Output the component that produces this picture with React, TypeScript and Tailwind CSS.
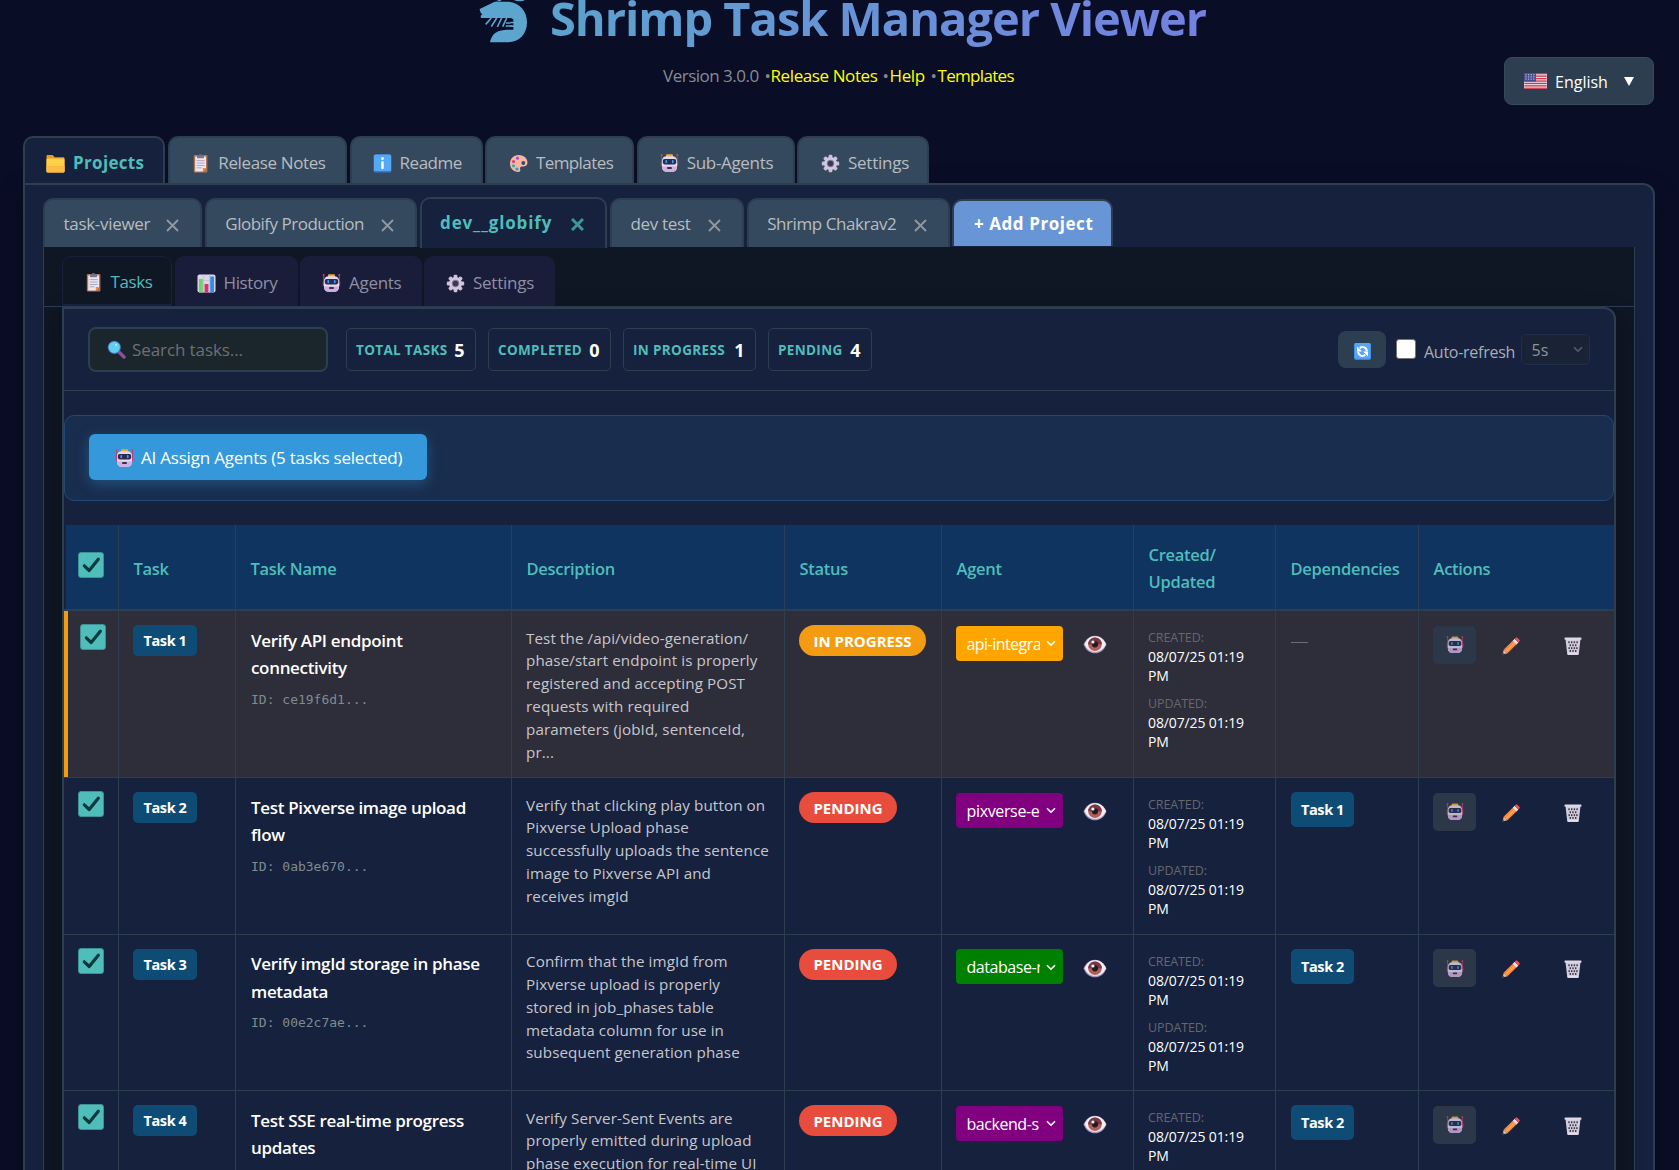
import type { ReactNode } from 'react';

type IconProps = { className?: string };

const Robot = ({ className = 'h-[18px] w-[19px]' }: IconProps) => (
  <svg viewBox="0 0 19 18" className={`shrink-0 ${className}`}>
    <rect x="1.2" y="0.5" width="1" height="8" fill="#c2336a" />
    <rect x="16.8" y="0.5" width="1" height="8" fill="#c2336a" />
    <rect x="0.7" y="0" width="1.8" height="1.8" rx="0.9" fill="#e0406f" />
    <rect x="16.4" y="0" width="1.8" height="1.8" rx="0.9" fill="#e0406f" />
    <rect x="0.8" y="6.5" width="17.4" height="6" rx="1.5" fill="#d23f74" />
    <rect x="6" y="0.3" width="7" height="4" rx="1" fill="#efae25" />
    <rect x="2" y="2.2" width="15" height="15.6" rx="4.5" fill="#e3d8ec" />
    <path d="M2 12.5h15v.8a4.5 4.5 0 0 1-4.500 4.500h-6A4.500 4.500 0 0 1 2 13.300z" fill="#cfb0e0" />
    <rect x="2.800" y="5" width="13.400" height="5.400" rx="1.800" fill="#2c2a50" />
    <rect x="5.400" y="6" width="1.700" height="3.200" rx="0.800" fill="#2fa4ef" />
    <rect x="11.900" y="6" width="1.700" height="3.200" rx="0.800" fill="#2fa4ef" />
    <rect x="7.200" y="12.900" width="4.600" height="2" rx="0.500" fill="#45294f" />
  </svg>
);

const Gear = () => (
  <svg viewBox="0 0 19 19" className="h-[19px] w-[19px] shrink-0">
    {[0, 45, 90, 135].map((a) => (
      <rect key={a} x="7.6" y="0.8" width="3.8" height="17.4" rx="1.2" fill="#cdc0da" transform={`rotate(${a} 9.5 9.5)`} />
    ))}
    <circle cx="9.5" cy="9.5" r="6.4" fill="#d3c8df" />
    <circle cx="9.5" cy="9.5" r="3.7" fill="#8a7c9c" />
    <circle cx="9.5" cy="9.5" r="2.7" fill="#2f3d55" />
  </svg>
);

const Clipboard = () => (
  <svg viewBox="0 0 19 19" className="h-[19px] w-[19px] shrink-0">
    <rect x="2.8" y="1" width="13.6" height="17.6" rx="1" fill="#b9734a" />
    <path d="M4.2 2.6H15V14l-3.2 3.4H4.2z" fill="#ece6f4" />
    <path d="M15 14l-3.2 3.4V14z" fill="#e08c4d" />
    <rect x="6" y="1" width="7" height="3.2" rx="0.6" fill="#7d7488" />
    <rect x="8" y="0" width="3" height="2" rx="1" fill="#6d6479" />
    {[6.2, 8.6, 11, 13.4].map((y) => (
      <rect key={y} x="5.6" y={y} width={y > 13 ? 5 : 8} height="0.9" fill="#a89fb8" />
    ))}
  </svg>
);

const Folder = () => (
  <svg viewBox="0 0 19 19" className="h-[19px] w-[19px] shrink-0">
    <path d="M.5 2.2C.5 1.5 1 1 1.7 1h5l2 2.2h8.6c.7 0 1.2.5 1.2 1.2v12.4H.5z" fill="#e89a20" />
    <rect x="0.5" y="4.5" width="18" height="14" rx="1.3" fill="#ffd04a" />
    <path d="M.5 12h18v5.2c0 .7-.6 1.300-1.300 1.300H1.800c-.7 0-1.300-.6-1.300-1.300z" fill="#fdbb45" />
  </svg>
);

const Info = () => (
  <svg viewBox="0 0 19 19" className="h-[19px] w-[19px] shrink-0">
    <rect x="0.5" y="0.5" width="18" height="18" rx="1.8" fill="#3a78d8" />
    <rect x="1" y="0.5" width="17" height="16.6" rx="1.6" fill="#55a8f5" />
    <circle cx="9.5" cy="4.6" r="1.4" fill="#fff" />
    <rect x="8.3" y="7.2" width="2.4" height="7.8" rx="0.8" fill="#fff" />
  </svg>
);

const Palette = () => (
  <svg viewBox="0 0 19 19" className="h-[19px] w-[19px] shrink-0">
    <path d="M9.5 1C4.6 1 1 4.8 1 9.6 1 14.5 4.5 18 9 18c2 0 2.7-1.3 2.2-2.7-.6-1.8.3-3 2.3-2.8 3 .2 5-1 5-3.9C18.5 4 14.4 1 9.5 1z" fill="#f7b7a0" />
    <circle cx="14.3" cy="9" r="1.9" fill="#3a4a60" />
    <circle cx="8.5" cy="4.2" r="1.6" fill="#b04ae0" />
    <circle cx="4.5" cy="7.5" r="1.6" fill="#e8357a" />
    <circle cx="4.5" cy="11.8" r="1.6" fill="#21b8a4" />
    <circle cx="8" cy="15" r="1.6" fill="#3a8ef0" />
  </svg>
);

const Chart = () => (
  <svg viewBox="0 0 19 19" className="h-[19px] w-[19px] shrink-0">
    <rect x="0.5" y="0.5" width="18" height="18" rx="2" fill="#dcd5e6" />
    <path d="M.5 6.5h18M.5 12h18M6.500.5v18M12.500.5v18" stroke="#c2b8d2" strokeWidth="0.7" />
    <rect x="2" y="5" width="3.8" height="13.5" fill="#6fd36a" />
    <rect x="7.6" y="10" width="3.8" height="8.5" fill="#d9306f" />
    <rect x="13.2" y="2.5" width="3.8" height="16" fill="#2d8fe6" />
  </svg>
);

const Magnifier = () => (
  <svg viewBox="0 0 19 19" className="h-[19px] w-[19px] shrink-0">
    <path d="M12 12l5 5" stroke="#8d4f9c" strokeWidth="3.4" strokeLinecap="round" />
    <circle cx="7.3" cy="7.3" r="6.6" fill="#4a74c8" />
    <circle cx="7.3" cy="7.3" r="5.6" fill="#5fd0f0" />
    <circle cx="9" cy="4.8" r="1.1" fill="#b5ecfa" />
  </svg>
);

const Refresh = () => (
  <svg viewBox="0 0 17 17" className="h-[17px] w-[17px] shrink-0">
    <rect width="17" height="17" rx="1.7" fill="#3d7fe0" />
    <rect x="0.5" width="16" height="15.8" rx="1.5" fill="#55a6f7" />
    <path d="M4.2 8.8a4.200 4.200 0 0 0 7 3M12.800 8.200a4.200 4.200 0 0 0-7-3" stroke="#fff" strokeWidth="1.9" fill="none" />
    <path d="M3 3.500v5h5zM14 13.500v-5H9z" fill="#fff" />
  </svg>
);

const Eye = () => (
  <svg viewBox="0 0 24 19" className="h-[19px] w-[24px] shrink-0">
    <path d="M.5 9.5C3 3.500 7 .7 12 .7s9 2.800 11.500 8.800c-2.500 6-6.500 8.800-11.500 8.800S3 15.500.500 9.500z" fill="#a796bd" />
    <path d="M1.500 9.200C4 3.800 7.500 1.200 12 1.200s8.500 2.600 11 8c-2.500 5.200-6.500 7.600-11 7.600S4 14.400 1.500 9.200z" fill="#f2eef6" />
    <circle cx="12" cy="9.3" r="6.8" fill="#b0605a" />
    <path d="M5.200 9.300a6.800 6.800 0 0 1 13.600 0z" fill="#7a3845" />
    <circle cx="12" cy="9.3" r="3.100" fill="#2a1722" />
    <circle cx="9.900" cy="7" r="1.600" fill="#fff" />
  </svg>
);

const Pencil = () => (
  <svg viewBox="0 0 18 18" className="h-[18px] w-[18px] shrink-0">
    <path d="M.5 17.500l1.300-5 3.700 3.700z" fill="#e8b98f" />
    <path d="M1.800 12.500L11.500 3l3.700 3.700-9.700 9.500z" fill="#f98a3e" />
    <path d="M3.300 14L13 4.500l1 1L4.400 15z" fill="#ffa45c" />
    <path d="M10.800 3.700l1.900-1.900 3.700 3.700-1.900 1.900z" fill="#e6dcf2" />
    <path d="M12.700 1.800L13.700.8c.5-.5 1.200-.5 1.700 0l2 2c.5.5.5 1.200 0 1.700l-1 1z" fill="#f0504a" />
    <path d="M.5 17.500l.5-1.900 1.400 1.400z" fill="#4a3540" />
  </svg>
);

const Trash = () => (
  <svg viewBox="0 0 18 18" className="h-[18px] w-[18px] shrink-0">
    <path d="M1.500 2h15l-1.700 14.800c-.1.600-.5 1-1.100 1H4.300c-.6 0-1-.4-1.100-1z" fill="#d3ccdc" />
    <g fill="#3a3546">
      {[4.3, 7, 9.7, 12.4].map((x) => <rect key={x} x={x} y="4.3" width="1.4" height="1.9" />)}
      {[5.6, 8.3, 11].map((x) => <rect key={x} x={x} y="7.3" width="1.4" height="1.9" />)}
      {[4.5, 7, 9.7, 12.2].map((x) => <rect key={x} x={x} y="10.2" width="1.4" height="1.9" />)}
      {[5.6, 8.3, 11].map((x) => <rect key={x} x={x} y="13" width="1.4" height="1.9" />)}
    </g>
    <rect x="0.5" y="0.5" width="17" height="2.3" rx="0.8" fill="#ded7e6" />
    <rect x="3.6" y="16.3" width="10.8" height="1.4" fill="#eee9f3" />
  </svg>
);

const Flag = () => (
  <svg viewBox="0 0 23 16" className="h-[16px] w-[23px] shrink-0">
    <rect width="23" height="16" rx="1.5" fill="#efe6ee" />
    {[0, 2.5, 5, 7.4, 9.8, 12.2, 14.6].map((y) => (
      <rect key={y} x="0.3" y={y} width="22.4" height="1.3" fill="#c8384e" />
    ))}
    <rect width="12" height="8.6" fill="#4a4f94" />
    {[1.2, 3.4, 5.6].map((y) =>
      [1.4, 4, 6.6, 9.2].map((x) => <rect key={`${x}-${y}`} x={x} y={y} width="1.2" height="1" fill="#c9c9e4" />),
    )}
  </svg>
);

const Check = () => (
  <svg viewBox="0 0 26 26" className="h-[26px] w-[26px] shrink-0">
    <rect x="0.5" y="0.5" width="25" height="25" rx="2.5" fill="#4fbdba" stroke="#3f8f96" />
    <path d="M6.300 13.800l4.900 4.700L20.300 7.300" fill="none" stroke="#053a3c" strokeWidth="3.2" strokeLinecap="round" strokeLinejoin="round" />
  </svg>
);

const Close = ({ active }: { active?: boolean }) => (
  <svg viewBox="0 0 13 13" className={`h-[13px] w-[13px] shrink-0 ${active ? 'mt-[3px] text-[#3e9699]' : 'mt-[3px] text-[#8f989f]'}`}>
    <path d="M1 1l11 11M12 1L1 12" stroke="currentColor" strokeWidth={active ? 3 : 1.9} />
  </svg>
);

const Chevron = () => (
  <svg viewBox="0 0 10 7" className="h-[7px] w-[10px] shrink-0">
    <path d="M1 1.200l4 4 4-4" fill="none" stroke="currentColor" strokeWidth="1.6" />
  </svg>
);

const Shrimp = () => (
  <svg viewBox="28 0 150 135" className="mr-[21px] h-[45px] w-[50px] shrink-0" fill="#5ba5cf">
    <path d="M30 27L75 5h42c35 3 55 30 55 62 0 36-24 60-58 60H61c4-20 14-31 31-35 9-2 16-3 22-3h17v-8h-9v-5h9v-6h-9v-5h9v-7c-3-3-8-4-13-4H34c-2-5-1-8 4-11-4-3-7-7-8-16z" />
    <path d="M78 4L88 0h8l-5 4zM132 0h34c-8 5-21 5-34 0z" />
    <path d="M65 54l-17 19M81 54L65 80M96 54L83 81M111 54L99 80" stroke="#5ba5cf" strokeWidth="5" />
    <path d="M113 60l-7 18v8h8V60z" fill="#0a0d26" />
    <path d="M109 69h14M108 78h18" stroke="#5ba5cf" strokeWidth="5" />
  </svg>
);

const mainTabs: { label: string; icon: ReactNode; size: string; active?: boolean }[] = [
  { label: 'Projects', icon: <Folder />, size: 'w-[142px] pl-[21px] tracking-[0.32px]', active: true },
  { label: 'Release Notes', icon: <Clipboard />, size: 'w-[179px] pl-[21.5px] tracking-[-0.37px]' },
  { label: 'Readme', icon: <Info />, size: 'w-[133px] pl-[21px] tracking-[-0.5px]' },
  { label: 'Templates', icon: <Palette />, size: 'w-[148.5px] pl-[21.5px] tracking-[-0.58px]' },
  { label: 'Sub-Agents', icon: <Robot />, size: 'w-[158px] pl-[21px] tracking-[-0.32px]' },
  { label: 'Settings', icon: <Gear />, size: 'w-[132px] pl-[21.5px] tracking-[-0.25px]' },
];

const projectTabs = [
  { label: 'task-viewer', size: 'w-[159px] tracking-[-0.3px]' },
  { label: 'Globify Production', size: 'w-[212px] tracking-[-0.5px]' },
  { label: 'dev__globify', size: 'w-[187.5px] tracking-[0.84px]', active: true },
  { label: 'dev test', size: 'w-[134px] tracking-[-0.3px]' },
  { label: 'Shrimp Chakrav2', size: 'w-[203px] tracking-[-0.44px]' },
];

const viewTabs = [
  { label: 'Tasks', icon: <Clipboard />, size: 'w-[110px] tracking-[-0.4px]', active: true },
  { label: 'History', icon: <Chart />, size: 'w-[123px] tracking-[-0.4px]' },
  { label: 'Agents', icon: <Robot />, size: 'w-[121.5px] tracking-[-0.3px]' },
  { label: 'Settings', icon: <Gear />, size: 'w-[131px] tracking-[-0.25px]' },
];

const stats = [
  { label: 'TOTAL TASKS', value: 5, size: 'w-[130px]' },
  { label: 'COMPLETED', value: 0, size: 'w-[123px]' },
  { label: 'IN PROGRESS', value: 1, size: 'w-[133px]' },
  { label: 'PENDING', value: 4, size: 'w-[104px]' },
];

const tasks = [
  {
    n: 'Task 1', name: 'Verify API endpoint\nconnectivity', id: 'ce19f6d1...', status: 'IN PROGRESS',
    desc: 'Test the /api/video-generation/\nphase/start endpoint is properly\nregistered and accepting POST\nrequests with required\nparameters (jobId, sentenceId,\npr...',
    agent: 'api-integra', agentBg: 'bg-[#ffa500] tracking-[-0.55px]', dep: '', height: 'h-[167px]',
  },
  {
    n: 'Task 2', name: 'Test Pixverse image upload\nflow', id: '0ab3e670...', status: 'PENDING',
    desc: 'Verify that clicking play button on\nPixverse Upload phase\nsuccessfully uploads the sentence\nimage to Pixverse API and\nreceives imgId',
    agent: 'pixverse-e', agentBg: 'bg-[#800080] tracking-[-0.35px]', dep: 'Task 1', height: 'h-[156.5px]',
  },
  {
    n: 'Task 3', name: 'Verify imgId storage in phase\nmetadata', id: '00e2c7ae...', status: 'PENDING',
    desc: 'Confirm that the imgId from\nPixverse upload is properly\nstored in job_phases table\nmetadata column for use in\nsubsequent generation phase',
    agent: 'database-r', agentBg: 'bg-[#008000] tracking-[-0.45px]', dep: 'Task 2', height: 'h-[156.5px]',
  },
  {
    n: 'Task 4', name: 'Test SSE real-time progress\nupdates', id: '', status: 'PENDING',
    desc: 'Verify Server-Sent Events are\nproperly emitted during upload\nphase execution for real-time UI',
    agent: 'backend-s', agentBg: 'bg-[#800080] tracking-[-0.45px]', dep: 'Task 2', height: 'h-[157px]',
  },
];

const columns = 'grid grid-cols-[55px_117px_276px_273px_157px_192px_142px_143px_1fr]';
const headings = ['Task', 'Task Name', 'Description', 'Status', 'Agent', 'Created/\nUpdated', 'Dependencies', 'Actions'];

function Stamp({ label, className = '' }: { label: string; className?: string }) {
  return (
    <div className={className}>
      <div className="text-[12.5px] leading-[18px] tracking-[-0.1px] text-[#66676d]">{label}</div>
      <div className="whitespace-pre text-[14px] leading-[19px] tracking-[-0.12px] text-white">{'08/07/25 01:19\nPM'}</div>
    </div>
  );
}

function TaskRow({ task, first }: { task: (typeof tasks)[number]; first: boolean }) {
  const cell = 'border-r border-[#2c3e50] px-[14px]';
  return (
    <div className={`${columns} ${task.height} overflow-hidden border-b border-[#2c3e50] ${first ? 'bg-[#2e2d3a]' : ''}`}>
      <div className={`border-r border-[#2c3e50] pt-[13px] ${first ? 'border-l-4 border-l-[#f39c12] pl-3' : 'pl-[14px]'}`}><Check /></div>
      <div className={`${cell} pt-[14px]`}>
        <span className="flex h-[31px] w-[64px] items-center justify-center rounded-[5px] bg-[#0f4c75] pt-px text-[14.5px] font-bold tracking-[-0.4px] text-white">{task.n}</span>
      </div>
      <div className={`${cell} pl-[15px] pt-[15.5px]`}>
        <div className="whitespace-pre text-[17px] font-semibold leading-[27.5px] tracking-[-0.33px] text-white">{task.name}</div>
        {task.id && <div className="mt-2 font-['DejaVu_Sans_Mono'] text-[13px] leading-5 text-[#7f8c8d]">ID: {task.id}</div>}
      </div>
      <div className={`${cell} whitespace-pre pt-[15.5px] text-[15.2px] leading-[22.85px] tracking-[0.1px] text-[#c6c7cc]`}>{task.desc}</div>
      <div className={`${cell} pt-[14px]`}>
        <span className={`flex h-[31px] items-center justify-center rounded-full text-[15px] font-bold text-white ${task.status === 'PENDING' ? 'w-[98px] bg-[#e74c3c]' : 'w-[127px] bg-[#f39c12]'}`}>{task.status}</span>
      </div>
      <div className={`${cell} flex items-start pt-[14.5px]`}>
        <span className={`flex h-[35px] w-[107px] items-center justify-between rounded-[4px] pl-[10.5px] pr-[7px] pt-px text-[16px] text-white ${task.agentBg}`}>
          <span className="w-[73px] overflow-hidden whitespace-nowrap">{task.agent}</span>
          <Chevron />
        </span>
        <span className="ml-5 mt-[9.5px]"><Eye /></span>
      </div>
      <div className={`${cell} pt-[18px]`}>
        <Stamp label="CREATED:" />
        <Stamp label="UPDATED:" className="mt-[10px]" />
      </div>
      <div className={`${cell} pl-[15px] pt-[14px]`}>
        {task.dep ? (
          <span className="flex h-[35px] w-[63px] items-center justify-center rounded-[5px] bg-[#0f4c75] pt-px text-[14.5px] font-bold tracking-[-0.4px] text-white">{task.dep}</span>
        ) : (
          <span className="mt-[17px] block h-px w-[17px] bg-[#6c6c72]" />
        )}
      </div>
      <div className="flex items-start pl-[14px] pt-[14.5px]">
        <span className="flex h-[38px] w-[43px] items-center justify-center rounded-[5px] bg-[#2c3849] pt-px"><Robot className="h-[17.5px] w-[18px] opacity-80" /></span>
        <span className="ml-[26px] mt-[11px]"><Pencil /></span>
        <span className="ml-[44px] mt-[11px]"><Trash /></span>
      </div>
    </div>
  );
}

export default function App() {
  return (
    <div className="h-[1170px] w-[1679px] overflow-hidden bg-[#0a0d26] font-['Open_Sans',sans-serif] text-[17px] leading-6">
      <header className="flex h-[136px]">
        <div className="w-[1504px]">
          <div className="flex h-9 items-start pl-[479px]">
            <Shrimp />
            <h1 className="whitespace-nowrap text-[47px] font-bold leading-9 tracking-[-1.03px]">
              <span className="bg-gradient-to-r from-[#5ba3cd] to-[#7380e0] bg-clip-text text-transparent">Shrimp Task Manager Viewer</span>
            </h1>
          </div>
          <div className="mt-[28px] flex h-6 whitespace-nowrap pl-[663px] text-[#ffff00]">
            <span className="w-[101.5px] tracking-[-0.5px] text-[#888a92]">Version 3.0.0</span>
            <span className="w-[6px] text-[#888a92]">•</span>
            <span className="w-[112px] tracking-[-0.4px]">Release Notes</span>
            <span className="w-[7px] text-[#888a92]">•</span>
            <span className="w-[41px] tracking-[-0.4px]">Help</span>
            <span className="w-[7px] text-[#888a92]">•</span>
            <span className="tracking-[-0.68px]">Templates</span>
          </div>
        </div>
        <button className="mt-[57px] flex h-12 w-[150px] items-center rounded-lg border border-[#34495e] bg-[#2c3e50] pl-[19px] text-[16px] text-white">
          <Flag />
          <span className="ml-[8px] w-[68.5px] pt-0.5 text-left">English</span>
          <svg viewBox="0 0 10 9" className="h-[9px] w-[10px]"><path d="M0 0h10L5 9z" fill="#fff" /></svg>
        </button>
      </header>

      <nav className="ml-[23px] flex h-[47px] gap-[2.8px]">
        {mainTabs.map((t) => (
          <div key={t.label} className={`flex items-center gap-2 whitespace-nowrap rounded-t-[10px] border-2 border-b-0 border-[#2c3e50] pt-[5px] ${t.size} ${t.active ? 'bg-[#16213e] font-bold text-[#4fbdba]' : 'bg-[#34495e] text-[#b8bcc0]'}`}>
            {t.icon}
            {t.label}
          </div>
        ))}
      </nav>

      <main className="ml-[23px] h-[1100px] w-[1632px] rounded-tr-xl border-2 border-[#2c3e50] bg-[#16213e] px-[18px] shadow-[0_8px_24px_rgba(0,0,0,0.3)]">
        <div className="flex h-[62px] items-end gap-[2.8px]">
          {projectTabs.map((t) => (
            <div key={t.label} className={`flex items-center justify-between whitespace-nowrap rounded-t-[10px] border-2 border-b-0 border-[#2c3e50] pl-[18.5px] pr-[21px] ${t.size} ${t.active ? '-mb-px h-[51px] bg-[#16213e] pb-px font-bold text-[#4fbdba]' : 'h-[49px] bg-[#34495e] pt-px text-[#b8bcc0]'}`}>
              {t.label}
              <Close active={t.active} />
            </div>
          ))}
          <div className="mb-px flex h-[47px] w-[161px] items-center rounded-t-[10px] border-2 border-b-0 border-[#2c3e50] bg-[#6795d6] pl-[19.5px] font-bold tracking-[0.56px] text-white">+ Add Project</div>
        </div>

        <div className="h-[1000px] border-x border-[#2c3e50] bg-[#0f1624]">
          <div className="flex h-[60px] items-end gap-[2.5px] border-b border-[#2c3e50] pl-[18px]">
            {viewTabs.map((t) => (
              <div key={t.label} className={`flex h-[50px] items-center gap-2 whitespace-nowrap rounded-t-[9px] border ${t.size} ${t.active ? 'border-b-2 border-[#1a1f3d] bg-[#0f1624] pl-[20.5px] pt-[3px] text-[#4fbdba]' : 'border-transparent bg-[#1a1d3a] pl-[21px] pt-1 text-[#8d90a5]'}`}>
                {t.icon}
                {t.label}
              </div>
            ))}
          </div>

          <section className="mx-[18px] h-[940px] rounded-tr-xl border-2 border-[#2c3e50] bg-[#16213e] shadow-[0_8px_24px_rgba(0,0,0,0.3)]">
            <div className="flex h-[82px] items-start border-b border-[#2c3e50] px-6 pt-[18px]">
              <div className="flex h-[45px] w-[240px] items-center gap-[6.5px] rounded-lg border-2 border-[#2c3e50] bg-[#1b262c] pl-[16.5px] tracking-[-0.09px] text-[#6b7075]">
                <Magnifier />
                Search tasks...
              </div>
              <div className="ml-[18px] mt-px flex gap-3">
                {stats.map((s) => (
                  <div key={s.label} className={`flex h-[43px] items-center justify-between rounded-[5px] border border-[#2c3e50] pl-[9px] pr-[10.5px] pt-px ${s.size}`}>
                    <span className="text-[13.5px] font-bold tracking-[0.34px] text-[#4fbdba]">{s.label}</span>
                    <span className="text-[18px] font-bold text-white">{s.value}</span>
                  </div>
                ))}
              </div>
              <div className="ml-auto flex h-[45px] items-center">
                <span className="flex h-[37px] w-12 items-center justify-center rounded-lg bg-[#2c3e50] pt-[3px]"><Refresh /></span>
                <span className="mb-px ml-[10px] h-5 w-5 rounded-[3px] border border-[#767676] bg-white" />
                <span className="ml-2 w-[97px] whitespace-nowrap pt-[4px] text-[16px] tracking-[-0.27px] text-[#a9adb5]">Auto-refresh</span>
                <span className="flex h-[31px] w-[69px] items-center justify-between rounded-[5px] border border-[#202f47] bg-[#192335] pl-[9.5px] pr-[6px] text-[16px] text-[#8d939b]">
                  5s
                  <span className="text-[#55606c]"><Chevron /></span>
                </span>
              </div>
            </div>

            <div className="mt-6 h-[86px] rounded-[10px] border border-[#1f4a76] bg-[#192d4e] pl-6 pt-[18px]">
              <button className="flex h-[46px] w-[338px] items-center gap-[7px] whitespace-nowrap rounded-[6px] bg-[#3498db] pl-[26px] pt-[2px] text-[17px] tracking-[-0.21px] text-white shadow-[0_4px_14px_rgba(52,152,219,0.35)]">
                <Robot />
                AI Assign Agents (5 tasks selected)
              </button>
            </div>

            <div className={`${columns} mt-6 h-[86px] border-b-2 border-[#2c3e50] bg-[#0f3460]`}>
              <div className="flex items-center border-l-2 border-r border-l-[#16213e] border-r-[#2c3e50] pb-[4px] pl-3"><Check /></div>
              {headings.map((h) => (
                <div key={h} className="flex items-center whitespace-pre border-r border-[#2c3e50] pl-[14.5px] pt-[2px] text-[16.5px] font-semibold leading-[27px] tracking-[-0.28px] text-[#4fbdba] last:border-r-0">{h}</div>
              ))}
            </div>
            {tasks.map((t, i) => (
              <TaskRow key={t.n} task={t} first={i === 0} />
            ))}
          </section>
        </div>
      </main>
    </div>
  );
}
